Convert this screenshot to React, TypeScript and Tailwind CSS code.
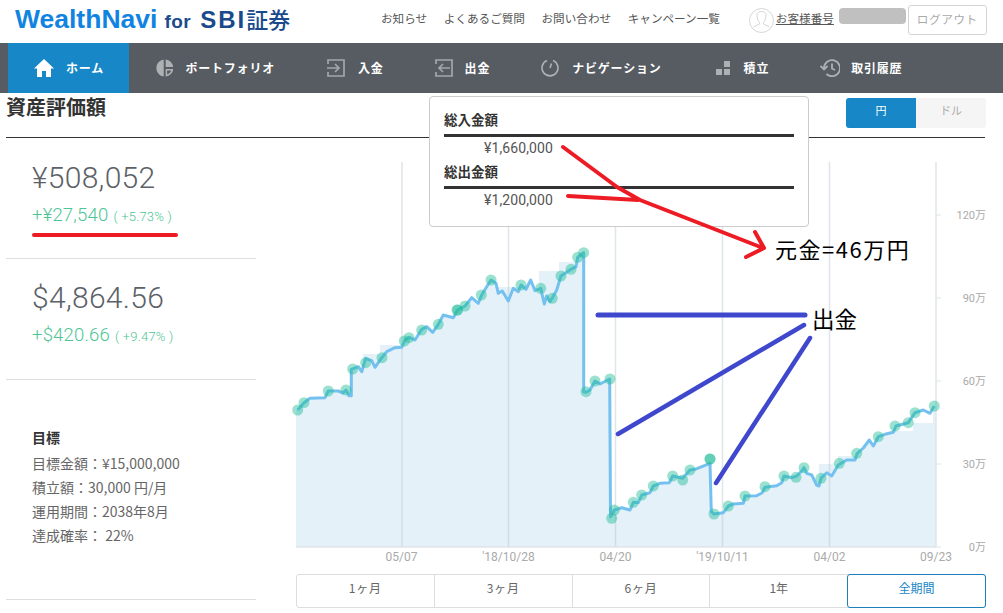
const line: [number, number][] = [
  [297.7,410],[304,402.7],[310,398.3],[325,397.7],[328.3,391],[338.3,391],[343,393],[346,390],[349,395.7],[351.3,395.7],[351.3,369.3],
  [358.3,366.7],[361.7,371.7],[365.7,358.3],[371.7,360.7],[375,367.3],[381.7,357.7],[386.7,351.7],[395,347.7],[401.7,347.3],[405,340],
  [409.3,337.3],[415,340],[421.7,329.3],[426.7,326.7],[432.7,332.3],[438.3,324.3],[443.3,315],[453.3,317.7],[457.7,310],[465,306],
  [471.7,297.7],[478.3,303.3],[481.7,295],[486.7,286.7],[491,280],[496,283.3],[498.3,293.3],[502.3,291],[508.3,301],[513.3,288.3],
  [518.3,291.7],[521,285],[526,289.3],[530.7,280],[535,290.7],[540.7,288.3],[544.3,304],[546.7,296],[550,301.7],[552.3,298],[556.7,290],
  [561,276],[571,269.3],[576,266.7],[577.7,257.3],[583.7,252.7],[583.7,391.7],[586,392.3],[590,390],[595,381],[600,384],[609.7,379],
  [610.5,516.7],[614.3,510],[621.7,507.7],[630,510],[633.3,502.3],[638.3,502.7],[641.7,495],[650,492.7],[653.3,486],[660,483.3],
  [669.3,482.7],[672.7,476],[682.7,478.3],[690,470],[695,469.3],[710,463.3],[711.3,511.7],[714,514],[723.3,512.7],[728.3,506],
  [733.3,504],[743.3,503.3],[745,496],[756.7,495.7],[762,493],[765,487.3],[776.7,485.7],[781.7,482.7],[784,476],[791.7,477.7],
  [796.7,476],[801.7,471],[804,467.7],[806.7,473.3],[811.7,475],[816.7,485],[819,486],[821,478.3],[826.7,472.7],[831.7,476],
  [838.3,465],[846.7,460],[855,460],[857.3,453.3],[863.3,448],[869.3,440],[873.3,446],[878.3,436.7],[885,434.3],[893.3,432.3],
  [896,426],[908.3,422.7],[915,412.7],[923.3,410],[930,413.3],[934.3,406],
];

const markers: [number, number][] = [
  [297.7,410],[304,402.7],[328.3,391],[346,390],[352.7,369],[365.7,362.7],[382,357.7],[404.3,341],[409,337.7],[421.7,330],[438.3,324.3],
  [457.7,310],[457,310],[465,306],[481.3,295],[491,280],[521,285],[540.7,288.3],[552.3,298.3],[561,276],[571,269.3],[577.7,257.3],
  [583.7,252.7],[586,391.7],[595,381],[610,379],[611.7,518.3],[614.3,510],[633.3,502.3],[641.7,495],[653.3,486],[672.7,476],
  [682.7,480],[690,470],[710,459],[710,459],[714,514],[728.3,506],[745,496],[765,486.7],[784,476],[796,477.3],[804,467.7],[821,478.3],
  [839.3,463.3],[856.7,453.3],[878.3,436.7],[895,426],[908.3,422.7],[915,412.7],[934.3,406],
];

const linePoints = line.map((p) => p.join(",")).join(" ");

// the shaded area runs in steps, so it sits a little off the line in places
const areaTop = line.filter((p) => p[0] < 893);
const areaPoints = [
  "296,547", "296,410",
  ...areaTop.map((p) => p.join(",")),
  "893,431", "913,431", "913,423", "933,423", "933,410", "936,410", "936,547",
].join(" ");

const areaBlocks = [
  [363, 354, 17, 20], [380, 345, 22, 20], [490, 287, 30, 20], [539, 271, 20, 30], [559, 262, 18, 20], [819, 464, 19, 20], [838, 456, 19, 20],
];

const gridX = [402, 508.5, 615.5, 722.5, 829.5];
const yLabels = [["120万", 215], ["90万", 298], ["60万", 381], ["30万", 464], ["0万", 547]] as const;
const xLabels = [["05/07", 401.5], ["'18/10/28", 508.5], ["04/20", 615.5], ["'19/10/11", 722.5], ["04/02", 829.5], ["09/23", 936]] as const;

const HomeIcon = () => (
  <svg width="20" height="20" viewBox="0 0 20 20" fill="#fff">
    <path d="M10 1 L20 10.5 L17 10.5 L17 19 L12 19 L12 13 L8 13 L8 19 L3 19 L3 10.5 L0 10.5 Z" />
  </svg>
);

const PieIcon = () => (
  <svg width="18" height="18" viewBox="0 0 18 18" fill="#aeb1b4">
    <path d="M8 0.1 L8 17.9 A9 9 0 0 1 8 0.1 Z" />
    <path d="M10 0.1 A9 9 0 0 1 17.9 8 L10 8 Z" />
    <path fillRule="evenodd" d="M10 10 L17.9 10 A9 9 0 0 1 10 17.9 Z M11.5 11.5 L11.5 15.8 A7 7 0 0 0 15.8 11.5 Z" />
  </svg>
);

const InIcon = () => (
  <svg width="18" height="18" viewBox="0 0 18 18" fill="none" stroke="#a3a7aa" strokeWidth="1.7">
    <path d="M1 5 V1 H17 V17 H1 V13" />
    <path d="M0 9 H12 M8 5 L12 9 L8 13" />
  </svg>
);

const OutIcon = () => (
  <svg width="18" height="18" viewBox="0 0 18 18" fill="none" stroke="#a3a7aa" strokeWidth="1.7">
    <path d="M1 5 V1 H17 V17 H1 V13" />
    <path d="M15 9 H4 M8 5 L4 9 L8 13" />
  </svg>
);

const GaugeIcon = () => (
  <svg width="18" height="18" viewBox="0 0 18 18" fill="none" stroke="#aeb1b4" strokeWidth="1.6">
    <path d="M6 1.5 A8 8 0 1 0 12 1.5" />
    <path d="M9 9 L10.5 4.5" />
  </svg>
);

const StepsIcon = () => (
  <svg width="14" height="14" viewBox="0 0 14 14" fill="#aeb1b4">
    <rect x="0" y="8" width="6" height="6" />
    <rect x="8" y="8" width="6" height="6" />
    <rect x="8" y="0" width="6" height="6" />
  </svg>
);

const HistoryIcon = () => (
  <svg width="20" height="18" viewBox="0 0 20 18" fill="none" stroke="#aeb1b4" strokeWidth="1.8">
    <path d="M4 9 A8 8 0 1 1 6.5 15" />
    <path d="M0.5 7 L4 10.5 L7.5 7" />
    <path d="M12 4.5 V9.5 L15 11" />
  </svg>
);

const navItems = [
  { label: "ポートフォリオ", icon: <PieIcon />, cls: "ml-[27px] gap-3", w: "w-[119px]" },
  { label: "入金", icon: <InIcon />, cls: "ml-[52px] gap-[13px]", w: "" },
  { label: "出金", icon: <OutIcon />, cls: "ml-[51px] gap-3", w: "" },
  { label: "ナビゲーション", icon: <GaugeIcon />, cls: "ml-[51px] gap-[13px]", w: "" },
  { label: "積立", icon: <StepsIcon />, cls: "ml-[54px] gap-[14px]", w: "" },
  { label: "取引履歴", icon: <HistoryIcon />, cls: "ml-[51px] gap-[11px]", w: "" },
];

const App = () => {
  return (
    <div className="relative w-[1003px] h-[613px] overflow-hidden bg-white font-['Noto_Sans_CJK_JP','Noto_Sans',sans-serif]">
      {/* top bar */}
      <header className="h-[43px] flex items-start">
        <div className="ml-[15px] mt-[2px] w-[279px] flex items-baseline whitespace-nowrap">
          <span className="font-['Liberation_Sans',sans-serif] text-[26.5px] leading-[34px] font-bold text-[#1183e0]">WealthNavi</span>
          <span className="ml-[7px] font-['Liberation_Sans',sans-serif] text-[19px] font-bold text-[#1d4c8c] tracking-[0.5px]">for</span>
          <span className="ml-[9px] font-['Liberation_Sans',sans-serif] text-[24px] font-bold text-[#1b4a8c] tracking-[2px]">SBI</span>
          <span className="text-[22px] leading-[30px] font-medium text-[#1b4a8c]">証券</span>
        </div>
        <nav className="ml-[87px] mt-[10px] flex gap-[16.6px] text-[11.6px] leading-4 text-[#555] whitespace-nowrap">
          <span>お知らせ</span>
          <span>よくあるご質問</span>
          <span>お問い合わせ</span>
          <span>キャンペーン一覧</span>
        </nav>
        <svg className="ml-[29px] mt-[8px] shrink-0" width="25" height="25" viewBox="0 0 25 25" fill="none" stroke="#d6d6d6">
          <circle cx="12.5" cy="12.5" r="12" />
          <path d="M8 6.5 C8 2.5 17 2.5 17 6.5 C17 10 16 13 14.5 14.5 V16 L20.5 19 M10.5 14.5 V16 L4.5 19 M8 6.5 C8 10 9 13 10.5 14.5" />
        </svg>
        <div className="relative ml-[2px] mt-[10px] text-[11.6px] leading-4 text-[#555] whitespace-nowrap underline">お客様番号</div>
        <div className="ml-[5px] mt-[8px] w-[67px] h-[16px] rounded-[4px] bg-[#c0c0c0] blur-[0.5px]" />
        <button className="ml-[2px] mt-[5px] w-[79px] h-[30px] border border-[#d5d5d5] rounded-[3px] bg-white text-[11.6px] text-[#aaa] tracking-[0.6px] whitespace-nowrap">ログアウト</button>
      </header>

      {/* main nav */}
      <nav className="h-[50px] pl-2 bg-[#565c62] flex items-center text-white text-[12px] font-bold tracking-[0.8px] whitespace-nowrap">
        <div className="w-[121px] h-full pl-[26px] bg-[#1787c7] flex items-center gap-3">
          <HomeIcon />
          <span>ホーム</span>
        </div>
        {navItems.map((item) => (
          <div key={item.label} className={`flex items-center ${item.cls} ${item.w}`}>
            {item.icon}
            <span>{item.label}</span>
          </div>
        ))}
      </nav>

      {/* title row */}
      <div className="ml-[6px] w-[979px] h-[45px] border-b border-[#333] flex justify-between items-start">
        <h1 className="text-[20px] leading-[28px] font-bold text-[#333]">資産評価額</h1>
        <div className="mt-[5px] flex w-[140px] h-[30px] text-[11px] mr-[-1px]">
          <div className="flex-1 pb-[5px] rounded-l-[3px] bg-[#1787c7] text-white flex items-center justify-center">円</div>
          <div className="flex-1 pb-[5px] rounded-r-[3px] bg-[#f5f5f5] text-[#aaa] flex items-center justify-center">ドル</div>
        </div>
      </div>

      <div className="flex">
        {/* left column */}
        <aside className="ml-[6px] w-[250px] shrink-0 font-['Roboto','Noto_Sans_CJK_JP',sans-serif]">
          <div className="h-[121px] pl-[26px] pt-[20px] border-b border-[#ddd]">
            <div className="text-[30px] leading-[40px] font-light tracking-[0.3px] text-[#5b6167]">¥508,052</div>
            <div className="mt-[6px] text-[#4ec595] text-[18.5px] tracking-[0.2px] leading-[22px] font-light whitespace-nowrap">
              +¥27,540<span className="ml-[5px] text-[13px]">( +5.73% )</span>
            </div>
          </div>
          <div className="h-[121px] pl-[26px] pt-[19px] border-b border-[#ddd]">
            <div className="text-[30px] leading-[40px] font-light tracking-[0.3px] text-[#5b6167]">$4,864.56</div>
            <div className="mt-[6px] text-[#4ec595] text-[18.5px] tracking-[0.2px] leading-[22px] font-light whitespace-nowrap">
              +$420.66<span className="ml-[5px] text-[13px]">( +9.47% )</span>
            </div>
          </div>
          <div className="h-[220px] pl-[26px] pt-[45px] border-b border-[#ddd] text-[14px] leading-[24px] text-[#666] font-['Noto_Sans_CJK_JP',sans-serif]">
            <div className="font-bold text-[#333]">目標</div>
            <div className="mt-[2px]">目標金額：¥15,000,000</div>
            <div>積立額：30,000 円/月</div>
            <div>運用期間：2038年8月</div>
            <div>達成確率： 22%</div>
          </div>
        </aside>

        {/* chart + range */}
        <section className="ml-[34px] w-[713px]">
          <svg width="713" height="436" viewBox="290 138 713 436" className="block font-['Roboto','Noto_Sans_CJK_JP',sans-serif]">
            <polygon points={areaPoints} fill="#e4f1f9" />
            {areaBlocks.map(([x, y, w, h]) => (
              <rect key={x} x={x} y={y} width={w} height={h} fill="#e4f1f9" />
            ))}
            {gridX.map((x) => (
              <line key={x} x1={x} x2={x} y1={162} y2={547} stroke="#b9c6cf" strokeOpacity="0.45" strokeWidth="1.5" />
            ))}
            <line x1={936} x2={936} y1={162} y2={547} stroke="#dfe4e8" strokeWidth="1.5" />
            <line x1={296} x2={936} y1={547} y2={547} stroke="#dfe4e8" strokeWidth="1.5" />
            {yLabels.map(([label, y]) => (
              <g key={label}>
                <line x1={936} x2={941} y1={y} y2={y} stroke="#dfe4e8" />
                <text x={986} y={y + 4} textAnchor="end" fontSize="11" fill="#aaa">{label}</text>
              </g>
            ))}
            {xLabels.map(([label, x]) => (
              <text key={label} x={x} y={561} textAnchor="middle" fontSize="12" fill="#aaa">{label}</text>
            ))}
            <polyline points={linePoints} fill="none" stroke="#74c1ef" strokeWidth="3" strokeLinejoin="round" />
            {markers.map(([x, y], i) => (
              <circle key={i} cx={x} cy={y} r="5.5" fill="#1ebc96" fillOpacity="0.45" />
            ))}
          </svg>
          <div className="w-[690px] ml-[6px] h-[34px] flex text-[12px] text-[#666] border border-[#ddd] rounded-[3px] font-['Noto_Sans_CJK_JP',sans-serif]">
            <div className="flex-1 pb-[6px] flex items-center justify-center border-r border-[#ddd] tracking-[0.8px]">1ヶ月</div>
            <div className="flex-1 pb-[6px] flex items-center justify-center border-r border-[#ddd] tracking-[0.8px]">3ヶ月</div>
            <div className="flex-1 pb-[6px] flex items-center justify-center border-r border-[#ddd] tracking-[0.8px]">6ヶ月</div>
            <div className="flex-1 pb-[6px] flex items-center justify-center">1年</div>
            <div className="flex-1 pb-[6px] flex items-center justify-center -my-px -mr-px border border-[#1c7fb8] rounded-[3px] text-[#1787c7]">全期間</div>
          </div>
        </section>
      </div>

      {/* balance popup over the chart */}
      <div className="absolute left-[429px] top-[96px] w-[380px] h-[131px] bg-white border border-[#ccc] rounded-[4px] px-[14px] pt-[12px] text-[13.5px] leading-[20px]">
        <div className="font-bold text-[#333]">総入金額</div>
        <div className="mt-[5px] h-[3px] bg-[#333]" />
        <div className="pl-[40px] mt-px text-[14px] tracking-[0.1px] text-[#555] font-['Roboto',sans-serif]">¥1,660,000</div>
        <div className="mt-[3px] font-bold text-[#333]">総出金額</div>
        <div className="mt-[5px] h-[3px] bg-[#333]" />
        <div className="pl-[40px] mt-px text-[14px] tracking-[0.1px] text-[#555] font-['Roboto',sans-serif]">¥1,200,000</div>
      </div>

      {/* hand drawn notes on top of the screenshot */}
      <svg className="absolute inset-0" width="1003" height="613" viewBox="0 0 1003 613" fill="none" strokeLinecap="round">
        <path d="M34 235 H176" stroke="#ed1c24" strokeWidth="4" />
        <path d="M563 147 L617 187 L640 200 L763 248 M755 232 L764 248 L746 257 M568 196 L638 200" stroke="#ed1c24" strokeWidth="4" strokeLinejoin="round" />
        <path d="M598 315 H805" stroke="#3f48cc" strokeWidth="5" />
        <path d="M618 434 L804 325 M716 483 L810 338" stroke="#3f48cc" strokeWidth="4.5" />
      </svg>
      <div className="absolute left-[775px] top-[232px] text-[22px] leading-8 tracking-[1.5px] text-black whitespace-nowrap">元金=46万円</div>
      <div className="absolute left-[812px] top-[302px] text-[22.5px] leading-8 text-black whitespace-nowrap">出金</div>
    </div>
  );
};

export default App;
